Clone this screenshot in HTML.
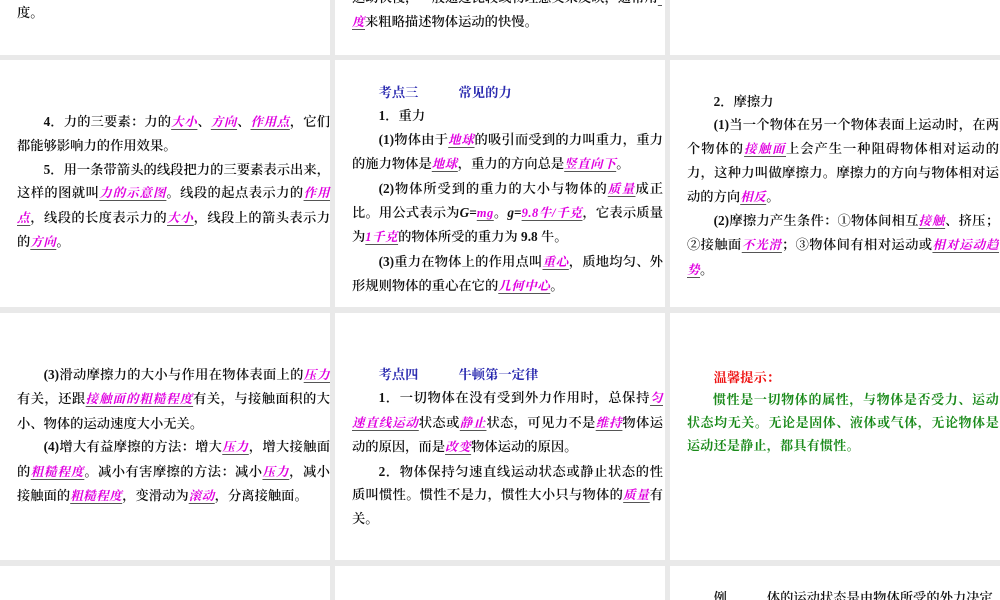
<!DOCTYPE html>
<html style="width:1000px;height:600px;overflow:hidden"><head><meta charset="utf-8"><style>
*{margin:0;padding:0;box-sizing:border-box}
body{width:1000px;height:600px;background:#e9e9e9;position:relative;overflow:hidden;font-family:"Liberation Serif","Noto Serif CJK SC",serif;color:#111}
.p{position:absolute;background:#fff;overflow:hidden}
.t{position:absolute;font-size:13.3px;line-height:23.4px;text-align:justify;font-weight:600}
.t p{text-indent:2em}
.t p.n{text-indent:0}
u{color:#e000e0;text-decoration:underline;text-decoration-color:#555;text-underline-offset:3px;font-family:"Liberation Serif","Noto Serif CJK SC",serif;font-style:italic;font-size:12.5px;letter-spacing:0.5px;font-weight:700}
.h{color:#2b2bb0;font-weight:700}
.g{color:#1a8a1a;font-weight:700;font-size:13px;line-height:22.6px;letter-spacing:0.3px}
</style></head><body>
<div class="p" style="left:0;top:0;width:330px;height:55px"></div>
<div class="p" style="left:335px;top:0;width:330px;height:55px"></div>
<div class="p" style="left:670px;top:0;width:330px;height:55px"></div>
<div class="p" style="left:0;top:60px;width:330px;height:247px"></div>
<div class="p" style="left:335px;top:60px;width:330px;height:247px"></div>
<div class="p" style="left:670px;top:60px;width:330px;height:247px"></div>
<div class="p" style="left:0;top:313px;width:330px;height:247px"></div>
<div class="p" style="left:335px;top:313px;width:330px;height:247px"></div>
<div class="p" style="left:670px;top:313px;width:330px;height:247px"></div>
<div class="p" style="left:0;top:566px;width:330px;height:34px"></div>
<div class="p" style="left:335px;top:566px;width:330px;height:34px"></div>
<div class="p" style="left:670px;top:566px;width:330px;height:34px"></div>

<div class="t" style="left:17px;top:1px;width:313px"><p class="n">度。</p></div>
<div class="t" style="left:352px;top:-14px;width:310px;white-space:nowrap;overflow:hidden;height:60px"><p class="n">运动快慢，一般通过比较或物理意义来反映，通常用<u>平均速</u></p><p class="n"><u>度</u>来粗略描述物体运动的快慢。</p></div>

<div class="t" style="left:17px;top:110px;width:313px">
<p>4．力的三要素：力的<u>大小</u>、<u>方向</u>、<u>作用点</u>，它们都能够影响力的作用效果。</p>
<p>5．用一条带箭头的线段把力的三要素表示出来，这样的图就叫<u>力的示意图</u>。线段的起点表示力的<u>作用点</u>，线段的长度表示力的<u>大小</u>，线段上的箭头表示力的<u>方向</u>。</p>
</div>

<div class="t" style="left:352px;top:81px;width:311px">
<p class="h" style="text-indent:2em">考点三<span style="display:inline-block;width:40px"></span>常见的力</p>
<p>1．重力</p>
<p>(1)物体由于<u>地球</u>的吸引而受到的力叫重力，重力的施力物体是<u>地球</u>，重力的方向总是<u>竖直向下</u>。</p>
<p>(2)物体所受到的重力的大小与物体的<u>质量</u>成正比。用公式表示为<i>G</i>=<u>mg</u>。<i>g</i>=<u>9.8牛/千克</u>，它表示质量为<u>1千克</u>的物体所受的重力为 9.8 牛。</p>
<p>(3)重力在物体上的作用点叫<u>重心</u>，质地均匀、外形规则物体的重心在它的<u>几何中心</u>。</p>
</div>

<div class="t" style="left:687px;top:90px;width:312px">
<p>2．摩擦力</p>
<p>(1)当一个物体在另一个物体表面上运动时，在两个物体的<u>接触面</u>上会产生一种阻碍物体相对运动的力，这种力叫做摩擦力。摩擦力的方向与物体相对运动的方向<u>相反</u>。</p>
<p>(2)摩擦力产生条件：①物体间相互<u>接触</u>、挤压；②接触面<u>不光滑</u>；③物体间有相对运动或<u>相对运动趋势</u>。</p>
</div>

<div class="t" style="left:17px;top:363px;width:313px">
<p>(3)滑动摩擦力的大小与作用在物体表面上的<u>压力</u>有关，还跟<u>接触面的粗糙程度</u>有关，与接触面积的大小、物体的运动速度大小无关。</p>
<p>(4)增大有益摩擦的方法：增大<u>压力</u>，增大接触面的<u>粗糙程度</u>。减小有害摩擦的方法：减小<u>压力</u>，减小接触面的<u>粗糙程度</u>，变滑动为<u>滚动</u>，分离接触面。</p>
</div>

<div class="t" style="left:352px;top:363px;width:311px">
<p class="h" style="text-indent:2em">考点四<span style="display:inline-block;width:40px"></span>牛顿第一定律</p>
<p>1．一切物体在没有受到外力作用时，总保持<u>匀速直线运动</u>状态或<u>静止</u>状态，可见力不是<u>维持</u>物体运动的原因，而是<u>改变</u>物体运动的原因。</p>
<p>2．物体保持匀速直线运动状态或静止状态的性质叫惯性。惯性不是力，惯性大小只与物体的<u>质量</u>有关。</p>
</div>

<div class="t" style="left:687px;top:366px;width:312px">
<p style="color:#ee1111;font-weight:700">温馨提示：</p>
<p class="g">惯性是一切物体的属性，与物体是否受力、运动状态均无关。无论是固体、液体或气体，无论物体是运动还是静止，都具有惯性。</p>
</div>

<div class="t" style="left:687px;top:586px;width:312px;white-space:nowrap;overflow:hidden;height:14px"><p>例　　　体的运动状态是由物体所受的外力决定</p></div>
</body></html>
